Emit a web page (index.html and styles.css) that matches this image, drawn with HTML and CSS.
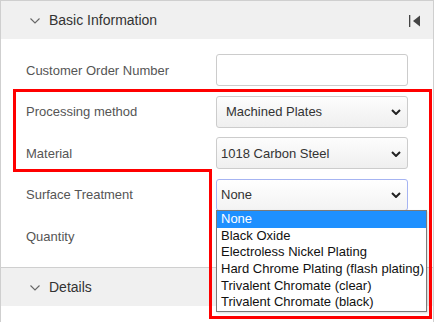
FILE: index.html
```html
<!DOCTYPE html>
<html>
<head>
<meta charset="utf-8">
<link rel="stylesheet" href="styles.css">
</head>
<body>
<div class="panel">
  <div class="section-head">
    <svg class="chev" width="10" height="6" viewBox="0 0 10 6"><polyline points="0.5,0.5 5,5 9.5,0.5" fill="none" stroke="#666" stroke-width="1.1"/></svg>
    <span class="head-title">Basic Information</span>
    <svg class="collapse" width="12" height="12" viewBox="0 0 12 12"><rect x="0" y="0" width="1.3" height="12" fill="#444"/><polygon points="11,0.5 11,11.5 4,6" fill="#444"/></svg>
  </div>
  <div class="section-body">
    <div class="row">
      <span class="label">Customer Order Number</span>
      <div class="input"></div>
    </div>
    <div class="row">
      <span class="label">Processing method</span>
      <div class="select pad-wide"><span>Machined Plates</span>
        <svg class="sel-chev" width="10" height="6" viewBox="0 0 10 6"><polyline points="1,1 5,5 9,1" fill="none" stroke="#222" stroke-width="2"/></svg>
      </div>
    </div>
    <div class="row">
      <span class="label">Material</span>
      <div class="select"><span>1018 Carbon Steel</span>
        <svg class="sel-chev" width="10" height="6" viewBox="0 0 10 6"><polyline points="1,1 5,5 9,1" fill="none" stroke="#222" stroke-width="2"/></svg>
      </div>
    </div>
    <div class="row">
      <span class="label">Surface Treatment</span>
      <div class="select-wrap">
        <div class="select focus"><span>None</span>
          <svg class="sel-chev" width="10" height="6" viewBox="0 0 10 6"><polyline points="1,1 5,5 9,1" fill="none" stroke="#222" stroke-width="2"/></svg>
        </div>
        <ul class="dropdown">
          <li class="active">None</li>
          <li>Black Oxide</li>
          <li>Electroless Nickel Plating</li>
          <li>Hard Chrome Plating (flash plating)</li>
          <li>Trivalent Chromate (clear)</li>
          <li>Trivalent Chromate (black)</li>
        </ul>
      </div>
    </div>
    <div class="row">
      <span class="label">Quantity</span>
      <div class="input"></div>
    </div>
  </div>
  <div class="section-head details">
    <svg class="chev" width="10" height="6" viewBox="0 0 10 6"><polyline points="0.5,0.5 5,5 9.5,0.5" fill="none" stroke="#666" stroke-width="1.1"/></svg>
    <span class="head-title">Details</span>
  </div>
  <div class="tail"></div>
</div>
<svg class="annot" width="435" height="322" viewBox="0 0 435 322">
  <path d="M14.5 90.5 H430.5 V317.5 H210.5 V170.5 H14.5 Z" fill="none" stroke="#ff0000" stroke-width="3" stroke-linejoin="miter"/>
</svg>
</body>
</html>
```
FILE: styles.css
```css
html, body {
  margin: 0;
  padding: 0;
  background: #fff;
}
body {
  position: relative;
  width: 435px;
  height: 322px;
  overflow: hidden;
  font-family: "Liberation Sans", Arial, sans-serif;
}
.panel {
  box-sizing: border-box;
  width: 434px;
  height: 322px;
  border: 1px solid #cfcfcf;
  border-bottom: none;
  display: flex;
  flex-direction: column;
}
.section-head {
  box-sizing: border-box;
  height: 38px;
  flex: none;
  background: #f0f0f0;
  display: flex;
  align-items: center;
  padding: 0 12px 0 29px;
}
.section-head.details {
  height: 39px;
  border-top: 1px solid #cfcfcf;
}
.chev {
  flex: none;
  margin-right: 9px;
  margin-top: 1px;
}
.head-title {
  font-size: 14px;
  color: #333;
}
.collapse {
  margin-left: auto;
  margin-top: 1px;
}
.section-body {
  box-sizing: border-box;
  height: 228px;
  flex: none;
  padding: 15px 25px 0 25px;
  display: flex;
  flex-direction: column;
  gap: 9.67px;
}
.row {
  height: 32px;
  display: flex;
  align-items: center;
  justify-content: space-between;
}
.label {
  font-size: 13px;
  color: #555;
}
.input {
  box-sizing: border-box;
  width: 192px;
  height: 32px;
  border: 1px solid #cccccc;
  border-radius: 3px;
  background: #fff;
}
.select {
  box-sizing: border-box;
  width: 192px;
  height: 32px;
  border: 1px solid #cccccc;
  border-radius: 3px;
  background: linear-gradient(to bottom, #fdfdfd, #efefef);
  display: flex;
  align-items: center;
  justify-content: space-between;
  padding: 0 6px 0 4px;
  font-size: 13px;
  color: #333;
}
.select.pad-wide {
  padding-left: 9px;
}
.select.focus {
  border-color: #a6b4f2;
  background: linear-gradient(to bottom, #ffffff, #f3f3f3);
}
.sel-chev {
  flex: none;
  margin-top: 1px;
}
.select-wrap {
  position: relative;
  width: 192px;
  height: 32px;
}
.dropdown {
  position: absolute;
  top: 31px;
  left: 0;
  z-index: 2;
  box-sizing: border-box;
  width: 211px;
  height: 102px;
  margin: 0;
  padding: 0;
  list-style: none;
  background: #fff;
  border: 1px solid #7a7a7a;
  box-shadow: 1px 1px 2px rgba(0,0,0,0.15);
}
.dropdown li {
  height: 16.67px;
  line-height: 16.67px;
  padding-left: 4px;
  font-size: 13px;
  color: #111;
  white-space: nowrap;
}
.dropdown li.active {
  background: #1e90ff;
  color: #fff;
}
.tail {
  flex: 1;
  background: #fff;
}
.annot {
  position: absolute;
  top: 0;
  left: 0;
  pointer-events: none;
  z-index: 5;
}
```
